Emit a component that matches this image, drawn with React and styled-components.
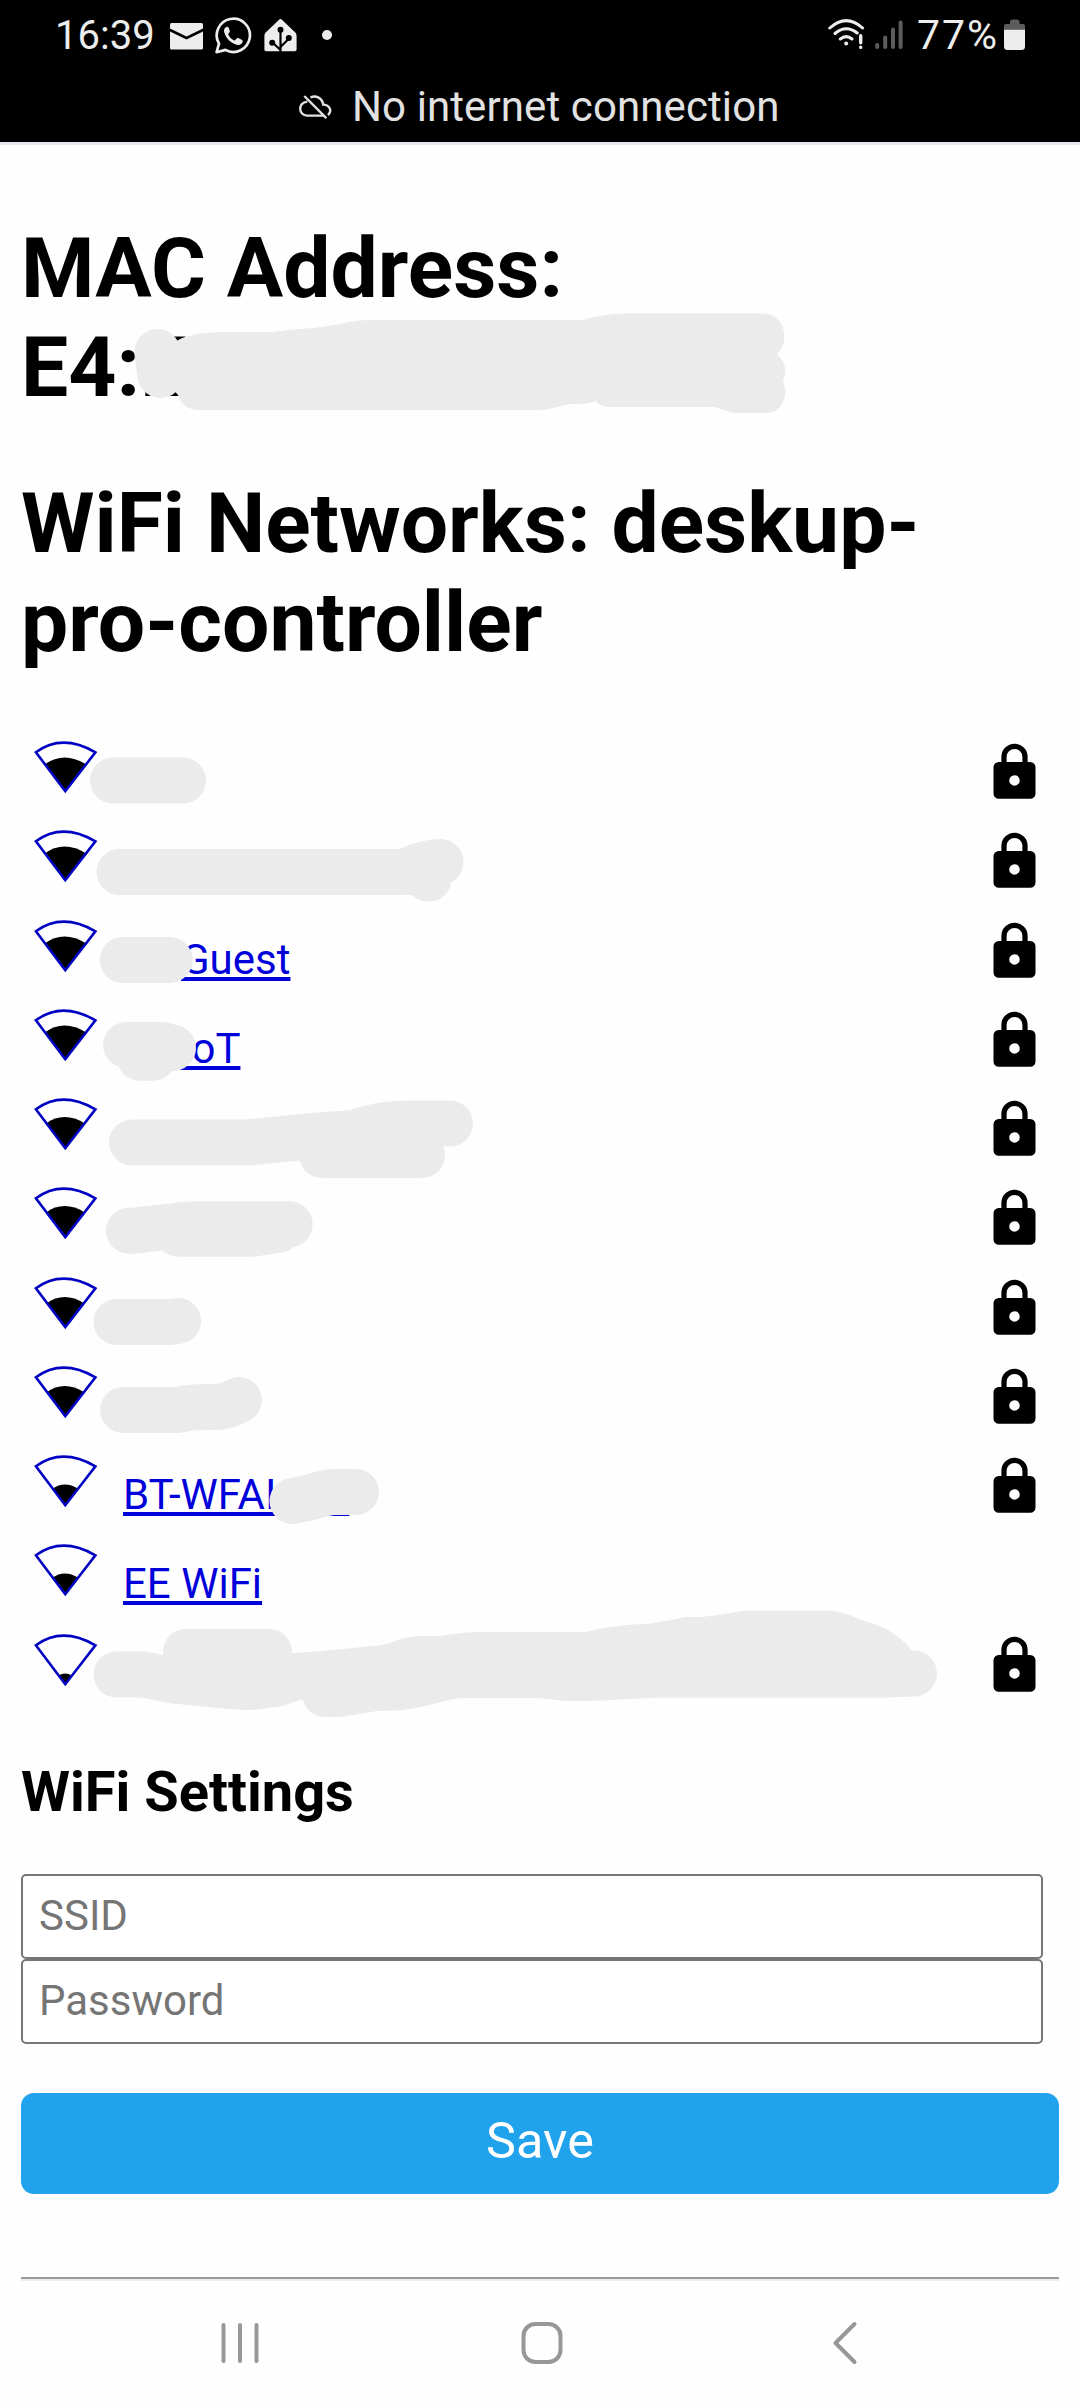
import React from "react";
import styled, { createGlobalStyle } from "styled-components";

const ROW_HEIGHT = 89.25;

const GlobalStyle = createGlobalStyle`
  body {
    margin: 0;
    background: #fefefe;
    color: #000;
    font-family: Roboto, "Noto Sans", sans-serif;
    font-size: 42px;
  }
`;

const Screen = styled.div`
  width: 1080px;
  height: 2408px;
  display: flex;
  flex-direction: column;
  overflow: hidden;
`;

const SystemHeader = styled.header`
  height: 142px;
  flex: none;
  background: #000;
  border-bottom: 3px solid #e8e8f0;
`;

const StatusBar = styled.div`
  height: 71px;
  padding: 0 55px 0 55px;
  display: flex;
  justify-content: space-between;
  color: #ededed;
`;

const StatusGroup = styled.div`
  display: flex;
  align-items: flex-start;
`;

const StatusText = styled.span`
  box-sizing: border-box;
  width: ${(p) => p.$width}px;
  padding: 12px 0 0 ${(p) => p.$inset || 0}px;
  font-size: ${(p) => p.$size || 40}px;
  line-height: 47px;
  letter-spacing: ${(p) => p.$tracking || 0}px;
  white-space: nowrap;
`;

const StatusIcon = styled.svg`
  display: block;
  flex: none;
  margin-top: ${(p) => p.$top}px;
  margin-left: ${(p) => p.$gap || 0}px;
`;

const Notice = styled.div`
  height: 71px;
  padding-left: 299px;
  display: flex;
  align-items: flex-start;
  gap: 20px;
  color: #e2e2e2;
`;

const NoticeText = styled.span`
  padding-top: 11px;
  font-size: 42px;
  line-height: 49px;
  letter-spacing: 0.1px;
  white-space: nowrap;
`;

const Main = styled.main`
  padding: 74px 21px 0;
  display: flex;
  flex-direction: column;
`;

const Title = styled.h1`
  position: relative;
  margin: 0 0 57px;
  font-size: 84px;
  line-height: 99px;
  font-weight: 700;
`;

const NetworkList = styled.ul`
  position: relative;
  margin: 12px 0 36px;
  padding: 0;
  list-style: none;
`;

const NetworkRow = styled.li`
  height: ${ROW_HEIGHT}px;
  padding: 0 13px;
  display: flex;
  align-items: flex-start;
`;

const Signal = styled.svg`
  flex: none;
  display: block;
`;

const NetworkLink = styled.a`
  margin: 15px auto 0 ${(p) => 25 + (p.$indent || 0)}px;
  color: #0000da;
  line-height: 49px;
  text-decoration: underline;
  text-decoration-thickness: 4px;
  text-underline-offset: 3px;
  text-decoration-skip-ink: none;
  white-space: nowrap;
`;

const Lock = styled.svg`
  flex: none;
  display: block;
`;

const Marker = styled.svg`
  position: absolute;
  top: 0;
  left: 0;
  overflow: visible;
  pointer-events: none;

  path {
    fill: none;
    stroke: #ebebeb;
    stroke-width: 46px;
    stroke-linecap: round;
    stroke-linejoin: round;
  }

  path.solid {
    fill: #ebebeb;
    stroke: none;
  }
`;

const SectionTitle = styled.h3`
  margin: 0 0 49px;
  font-size: 56px;
  line-height: 66px;
  font-weight: 700;
`;

const Form = styled.form`
  display: flex;
  flex-direction: column;
`;

const Field = styled.input`
  box-sizing: border-box;
  width: 1022px;
  height: 85px;
  padding: 0 16px 2px;
  border: 2px solid #767676;
  border-radius: 5px;
  background: #fff;
  font: 400 42px/49px Roboto, sans-serif;
  outline: none;

  &::placeholder {
    color: #757575;
    opacity: 1;
  }
`;

const SaveButton = styled.button`
  height: 101px;
  margin: 49px 0 83px;
  padding: 0 0 4px;
  border: 0;
  border-radius: 13px;
  background: #20a2ed;
  color: #fff;
  font: 400 50.4px/60px Roboto, sans-serif;
`;

const Divider = styled.hr`
  width: 100%;
  height: 0;
  box-sizing: content-box;
  margin: 0;
  border: 0;
  border-top: 2px solid #9a9a9a;
  border-bottom: 2px solid #eee;
`;

const NavBar = styled.nav`
  flex: 1;
  padding: 0 0 3px 221px;
  display: flex;
  align-items: center;
`;

const NavIcon = styled.svg`
  display: block;
  margin-right: ${(p) => p.$after}px;
  fill: none;
  stroke: #979797;
  stroke-width: 4px;
  stroke-linecap: round;
  stroke-linejoin: round;
`;

const networks = [
  { level: 0.69, locked: true },
  { level: 0.69, locked: true },
  { level: 0.69, locked: true, name: "Guest", indent: 58 },
  { level: 0.69, locked: true, name: "IoT", indent: 57 },
  { level: 0.64, locked: true },
  { level: 0.64, locked: true },
  { level: 0.62, locked: true },
  { level: 0.62, locked: true },
  { level: 0.43, locked: true, name: "BT-WFAI" + "\u00a0".repeat(7) },
  { level: 0.43, locked: false, name: "EE WiFi" },
  { level: 0.23, locked: true },
];

const strokes = [
  "M113 780.5H183",
  "M119.5 872H402C416 868 425 862 440.5 862M428.5 878.7H428.6M410 872L430 868",
  "M122.7 960H169.7",
  "M126 1045H162L173 1048M140 1057.7H153M140 1050H160",
  "M132 1142.5H247L313 1136L355 1133C372 1126 390 1123.5 410 1123.5H450M322 1155H422",
  "M129 1230.7H134L175 1226Q185 1224.3 200 1224.3H289.7M178 1233.7H252L278 1230",
  "M116.5 1322H170L178 1321",
  "M123 1410H178Q190 1407 205 1407H218L228 1405L239 1400",
  "M292.5 1501L305 1498.5C315 1497 322 1492 335 1492H356",
  "M116.5 1674.5H140C155 1675 165 1681 180 1681L210 1684Q235 1687 252 1687L275 1684L300 1676",
  "M186 1652H269M186 1668H269",
  "M325 1694H338L375 1688L395 1687.5C430 1685 440 1675 465 1675H537L565 1678H590L655 1674.7H880L914 1673.5",
  "M280 1677L325 1674L380 1668.5C395 1667 405 1660 420 1659H440Q465 1655 480 1655H589L606 1651Q630 1647 652 1646.5Q675 1643 688 1640H702Q715 1639 748 1633.5H824Q838 1634 852 1641L867 1646Q885 1653 893 1664",
];

function SignalIcon({ level }) {
  const tip = { x: 31.3, y: 51 };
  const left = tip.x - 30 * level;
  const right = tip.x + 30.5 * level;
  const edge = tip.y - 40 * level;
  return (
    <Signal width="64" height="54" viewBox="0 0 64 54">
      <path d={`M${tip.x} ${tip.y}L${left} ${edge}Q${tip.x - 2 * level} ${edge - 20 * level} ${right} ${edge}Z`} />
      <path d="M31.3 50.2L1.9 11.3Q28 -8 61.4 11.3Z" fill="none" stroke="#0202c2" strokeWidth="2.600" />
    </Signal>
  );
}

function LockIcon() {
  return (
    <Lock width="63" height="63" viewBox="0 0 24 24">
      <path
        fillRule="evenodd"
        d="M12 17a2 2 0 1 0 0-4 2 2 0 0 0 0 4M18 8a2 2 0 0 1 2 2v10a2 2 0 0 1-2 2H6a2 2 0 0 1-2-2V10a2 2 0 0 1 2-2h1V6a5 5 0 0 1 10 0v2h1M12 3a3 3 0 0 0-3 3v2h6V6a3 3 0 0 0-3-3z"
      />
    </Lock>
  );
}

export default function App() {
  return (
    <Screen>
      <GlobalStyle />
      <SystemHeader>
        <StatusBar>
          <StatusGroup>
            <StatusText $width={115}>16:39</StatusText>
            <StatusIcon $top={22} width="33" height="28" viewBox="0 0 33 28" fill="#ededed">
              <path d="M1.5 1H31.5Q33 1 33 2.5V6.5L16.5 14.5L0 6.5V2.5Q0 1 1.5 1Z" />
              <path d="M0 9.5L16.5 17.5L33 9.5V26Q33 27.5 31.5 27.5H1.5Q0 27.5 0 26Z" />
            </StatusIcon>
            <StatusIcon $top={17} $gap={12} width="37" height="37" viewBox="0 0 37 37" fill="none">
              <path d="M1.6 35.2L4 26.7A16.6 16.6 0 1 1 10.4 32.9Z" stroke="#ededed" strokeWidth="2.7" strokeLinejoin="round" />
              <path
                d="M12.4 9.7c-2.8.5-4 3-3 6 2 6 6.500 10.400 12.300 12 3 .700 5.600-.700 6-3.200.100-1-.200-1.400-1-1.800l-3.400-1.600c-.700-.300-1.200-.200-1.700.500l-1.200 1.500c-.400.500-.900.500-1.500.200-2.600-1.300-4.300-3.100-5.500-5.500-.300-.600-.200-1 .200-1.400l1-1.300c.400-.500.400-.900.200-1.400l-1.300-3.300c-.200-.600-.600-.800-1.100-.700z"
                fill="#ededed"
              />
            </StatusIcon>
            <StatusIcon $top={19} $gap={12} width="33" height="33" viewBox="0 0 33 33">
              <path
                d="M14.800 0.900Q16.500-.7 18.200 0.900L31.300 13.500Q32.600 14.800 32.600 16.800V30.500Q32.600 32.300 30.800 32.300H2.200Q.4 32.300.4 30.500V16.800Q.4 14.800 1.700 13.500Z"
                fill="#ededed"
              />
              <g fill="none" stroke="#000" strokeWidth="2.2">
                <path d="M16.500 11V33M16.500 31L8 23M16.500 28L25 19.500" />
              </g>
              <circle cx="16.500" cy="10.800" r="3" />
              <circle cx="8.200" cy="23.800" r="3" />
              <circle cx="24.800" cy="19" r="3" />
            </StatusIcon>
            <StatusIcon $top={30} $gap={25} width="10" height="10" viewBox="0 0 10 10">
              <circle cx="5" cy="5" r="5" fill="#ededed" />
            </StatusIcon>
          </StatusGroup>
          <StatusGroup>
            <StatusIcon $top={19} width="37" height="31" viewBox="0 0 37 31" fill="none" stroke="#ededed" strokeLinecap="round">
              <path d="M1.800 9Q18.200-5.800 34.600 9M7 14.500Q18.200 5.400 29.200 14M12.300 20Q18.200 15.300 24 20" strokeWidth="3" />
              <circle cx="18.200" cy="24.500" r="2" fill="#ededed" stroke="none" />
              <path d="M32.700 16.800V23.800M32.700 28.300V28.400" strokeWidth="3.400" />
            </StatusIcon>
            <StatusIcon $top={19} $gap={10} width="28" height="31" viewBox="0 0 28 31" fill="none" stroke="#5c5c5c" strokeWidth="4" strokeLinecap="round">
              <path d="M2.200 26V28M10.200 18.500V28M18 10.500V28M25.600 3.500V28" />
            </StatusIcon>
            <StatusText $width={101} $inset={14} $size={41} $tracking={2}>
              77%
            </StatusText>
            <StatusIcon $top={19} width="21" height="31" viewBox="0 0 21 31">
              <path d="M0 10V7Q0 5 2 5H6V3Q6 .5 8.500.5H13Q15.500.5 15.500 3V5H19Q21 5 21 7V10Z" fill="#5c5c5c" />
              <path d="M0 10.500H21V27.500Q21 31 17.500 31H3.500Q0 31 0 27.500Z" fill="#ededed" />
            </StatusIcon>
          </StatusGroup>
        </StatusBar>
        <Notice>
          <StatusIcon $top={23} width="33" height="27" viewBox="0 0 33 27" fill="none" stroke="#e2e2e2" strokeWidth="2.400">
            <path d="M5.300 2L27.300 24.200" />
            <path d="M11.500 3.400C17 .9 23.300 4.200 24.200 10.600C30.300 10.800 33.700 16.500 29 21.200" />
            <path d="M8.300 7.600C3 7.900 1.200 12 1.200 14.700C1.200 18.400 4 21.600 8 21.600H24" />
          </StatusIcon>
          <NoticeText>No internet connection</NoticeText>
        </Notice>
      </SystemHeader>

      <Main>
        <Title>
          MAC Address:
          <br />
          E4:E
          <Marker width="1038" height="198" viewBox="21 219 1038 198">
            <path d="M157.500 352L160.500 375" />
            <path
              className="solid"
              d="M170 345L180 339Q196 332 227 332H275Q282 330 314 328L340 324Q355 320 371 320H583Q602 314 625 313.500H764C777 314 784.500 325 784.500 337Q784 347 777 354Q785.500 362 785.500 372L783 381L785.500 390C785.500 404 777 413 766 413H740C724 413 722 407 710 407H607Q599 406 596 401Q590 404 573 404C560 405 552 410 539 410H196Q182 408 178 395L165 380Z"
            />
          </Marker>
        </Title>
        <Title>
          WiFi Networks: deskup-
          <br />
          pro-controller
        </Title>

        <NetworkList>
          {networks.map((n, i) => (
            <NetworkRow key={i}>
              <SignalIcon level={n.level} />
              <NetworkLink $indent={n.indent}>{n.name}</NetworkLink>
              {n.locked && <LockIcon />}
            </NetworkRow>
          ))}
          <Marker width="1038" height="982" viewBox="21 741 1038 982">
            {strokes.map((d) => (
              <path key={d} d={d} />
            ))}
          </Marker>
        </NetworkList>

        <SectionTitle>WiFi Settings</SectionTitle>
        <Form>
          <Field placeholder="SSID" />
          <Field placeholder="Password" />
          <SaveButton type="button">Save</SaveButton>
        </Form>
        <Divider />
      </Main>

      <NavBar>
        <NavIcon $after={260} width="39" height="44" viewBox="0 0 39 44">
          <path d="M2.500 4V40M19 4V40M35.500 4V40" />
        </NavIcon>
        <NavIcon $after={269} width="43" height="44" viewBox="0 0 43 44">
          <rect x="3.500" y="3" width="37" height="38" rx="12" />
        </NavIcon>
        <NavIcon $after={0} width="26" height="44" viewBox="0 0 26 44">
          <path d="M22.500 3L3.500 22L22.500 41" />
        </NavIcon>
      </NavBar>
    </Screen>
  );
}
